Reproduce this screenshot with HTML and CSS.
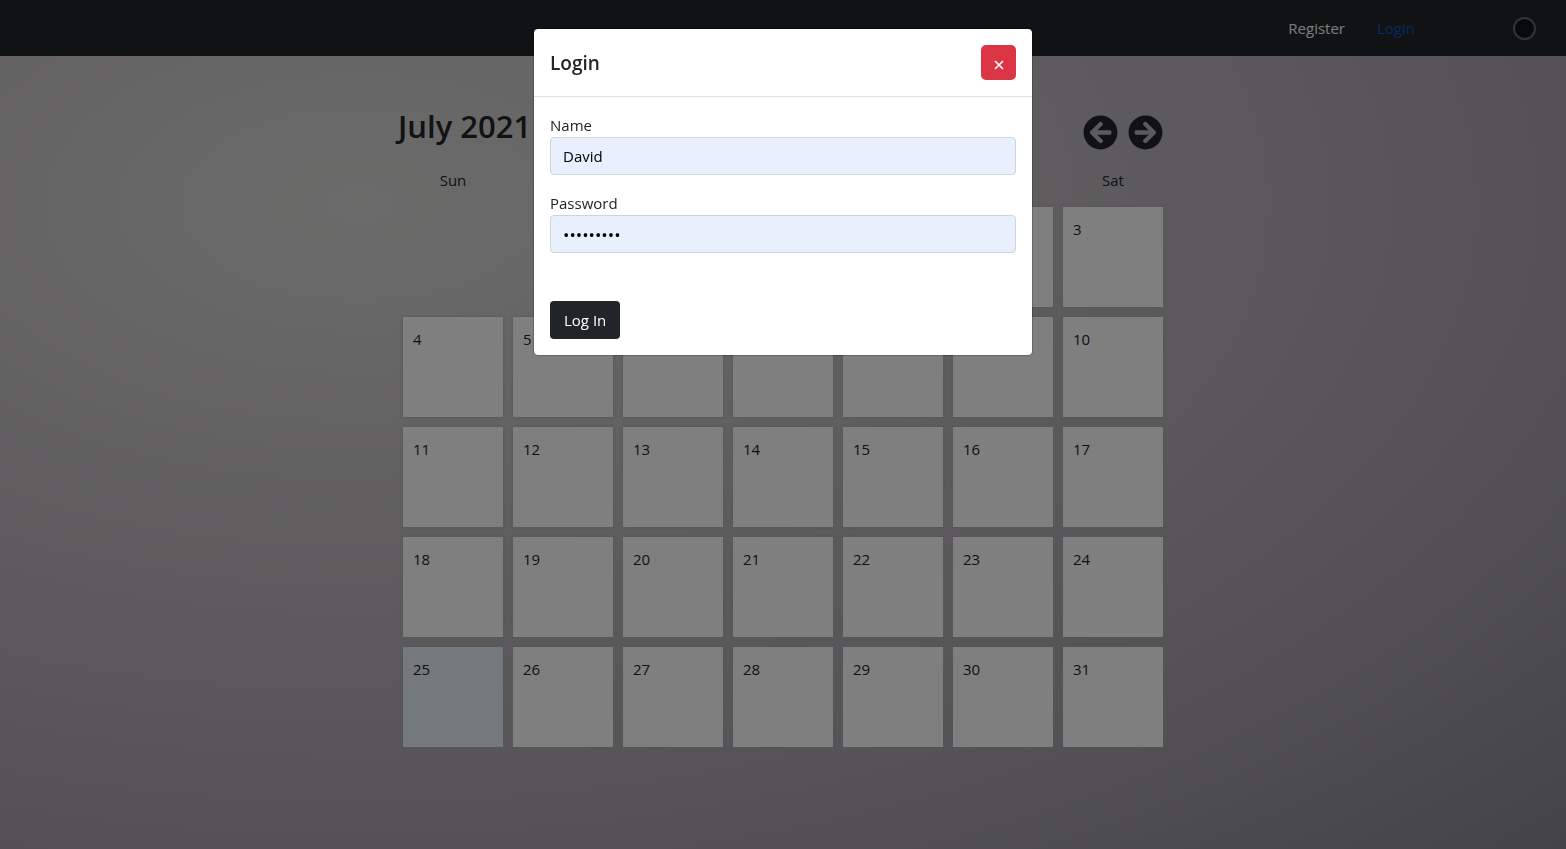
FILE: index.html
```html
<!DOCTYPE html>
<html lang="en">
<head>
<meta charset="utf-8">
<meta name="viewport" content="width=device-width, initial-scale=1">
<title>Calendar</title>
<link rel="stylesheet" href="styles.css">
</head>
<body>
<header class="navbar">
  <nav class="nav-links">
    <a class="nav-link" href="#">Register</a>
    <a class="nav-link active" href="#">Login</a>
  </nav>
  <button class="theme-dot" type="button" aria-label="Theme"></button>
</header>

<main class="calendar">
  <div class="calendar-head">
    <h1 class="calendar-title">July 2021</h1>
    <div class="calendar-nav">
      <button class="arrow" type="button" aria-label="Previous month">
        <svg viewBox="0 0 512 512"><path fill="currentColor" fill-rule="evenodd" d="M256 504C119 504 8 393 8 256S119 8 256 8s248 111 248 248-111 248-248 248zm28.900-143.600L209.400 288H392c13.300 0 24-10.700 24-24v-16c0-13.300-10.700-24-24-24H209.400l75.500-72.400c9.700-9.300 9.900-24.800.4-34.300l-11-10.900c-9.400-9.400-24.600-9.400-33.900 0L107.700 239c-9.400 9.400-9.400 24.600 0 33.900l132.700 132.700c9.400 9.400 24.600 9.400 33.900 0l11-10.900c9.500-9.500 9.300-25-.4-34.300z"/></svg>
      </button>
      <button class="arrow" type="button" aria-label="Next month">
        <svg viewBox="0 0 512 512"><path fill="currentColor" fill-rule="evenodd" d="M256 8c137 0 248 111 248 248S393 504 256 504 8 393 8 256 119 8 256 8zm-28.900 143.600l75.500 72.400H120c-13.300 0-24 10.700-24 24v16c0 13.300 10.700 24 24 24h182.600l-75.500 72.400c-9.700 9.300-9.900 24.800-.4 34.300l11 10.900c9.400 9.400 24.600 9.400 33.900 0L404.300 273c9.400-9.400 9.400-24.600 0-33.900L271.600 106.300c-9.400-9.400-24.600-9.400-33.900 0l-11 10.900c-9.500 9.600-9.300 25.100.4 34.400z"/></svg>
      </button>
    </div>
  </div>
  <table class="month">
    <thead>
      <tr><th>Sun</th><th>Mon</th><th>Tue</th><th>Wed</th><th>Thu</th><th>Fri</th><th>Sat</th></tr>
    </thead>
    <tbody>
      <tr><td class="empty"></td><td class="empty"></td><td class="empty"></td><td class="empty"></td><td>1</td><td>2</td><td>3</td></tr>
      <tr><td>4</td><td>5</td><td>6</td><td>7</td><td>8</td><td>9</td><td>10</td></tr>
      <tr><td>11</td><td>12</td><td>13</td><td>14</td><td>15</td><td>16</td><td>17</td></tr>
      <tr><td>18</td><td>19</td><td>20</td><td>21</td><td>22</td><td>23</td><td>24</td></tr>
      <tr><td class="today">25</td><td>26</td><td>27</td><td>28</td><td>29</td><td>30</td><td>31</td></tr>
    </tbody>
  </table>
</main>

<div class="backdrop">
  <section class="modal" role="dialog" aria-labelledby="modal-title">
    <div class="modal-header">
      <h2 class="modal-title" id="modal-title">Login</h2>
      <button class="close" type="button" aria-label="Close">
        <svg viewBox="0 0 10 10"><path d="M1 1l8 8M9 1l-8 8" stroke="currentColor" stroke-width="1.700"/></svg>
      </button>
    </div>
    <form class="modal-body">
      <div class="field">
        <label for="name">Name</label>
        <input id="name" type="text" value="David">
      </div>
      <div class="field">
        <label for="password">Password</label>
        <input id="password" type="password" value="password1">
      </div>
      <button class="submit" type="submit">Log In</button>
    </form>
  </section>
</div>
</body>
</html>
```
FILE: styles.css
```css
* {
  box-sizing: border-box;
}

body {
  margin: 0;
  min-height: 100vh;
  font-family: "Segoe UI", "Open Sans", "Noto Sans", sans-serif;
  font-size: 15px;
  line-height: 24px;
  color: #212529;
  background: radial-gradient(ellipse farthest-corner at 23% 24%, #d6d7d5 0%, #ccc9cb 21%, #b8b4b8 47%, #a8a4ab 71%, #88868d 100%);
}

button,
input {
  font: inherit;
}

.navbar {
  display: flex;
  align-items: center;
  justify-content: flex-end;
  gap: 98px;
  height: 56px;
  padding: 0 30px;
  background: #212529;
}

.nav-links {
  display: flex;
  gap: 32px;
}

.nav-link {
  color: #f8f9fa;
  text-decoration: none;
}

.nav-link.active {
  color: #0d56c8;
}

.theme-dot {
  width: 23px;
  height: 23px;
  padding: 0;
  border: 2px solid #65676b;
  border-radius: 50%;
  background: #121518;
}

.calendar {
  max-width: 780px;
  margin: 0 auto;
  padding-top: 52px;
}

.calendar-head {
  display: flex;
  justify-content: space-between;
  align-items: flex-start;
  padding: 0 10px 8px 5px;
}

.calendar-title {
  margin: 0;
  font-size: 31px;
  font-weight: 600;
  line-height: 36px;
}

.calendar-nav {
  display: flex;
  gap: 10px;
  padding-top: 7px;
}

.arrow {
  width: 35px;
  height: 35px;
  padding: 0;
  border: 0;
  background: none;
  color: #212529;
}

.arrow svg {
  display: block;
  width: 100%;
}

.month {
  width: 100%;
  table-layout: fixed;
  border-spacing: 10px;
}

.month th {
  padding: 0 0 5px;
  font-weight: 400;
  text-align: center;
}

.month td {
  height: 100px;
  padding: 10px;
  vertical-align: top;
  background: #fff;
  box-shadow: 0 0 4px #aaa;
}

.month .today {
  background: #e6f2fa;
}

.month .empty {
  background: none;
  box-shadow: none;
}

.backdrop {
  position: fixed;
  inset: 0;
  padding: 28px 16px;
  background: rgba(0, 0, 0, 0.5);
}

.modal {
  max-width: 500px;
  margin: 0 auto;
  border: 1px solid rgba(0, 0, 0, 0.2);
  border-radius: 5px;
  background: #fff;
  background-clip: padding-box;
}

.modal-header {
  display: flex;
  align-items: center;
  justify-content: space-between;
  padding: 16px;
  border-bottom: 1px solid #dee2e6;
}

.modal-title {
  margin: 0;
  font-size: 19px;
  font-weight: 600;
}

.close {
  display: flex;
  align-items: center;
  justify-content: center;
  width: 35px;
  height: 35px;
  padding: 5px 0 0;
  border: 0;
  border-radius: 5px;
  background: #dc3545;
  color: #fff;
}

.close svg {
  width: 10px;
  height: 10px;
}

.modal-body {
  padding: 16px;
}

.field {
  margin-bottom: 16px;
}

.field label {
  display: block;
}

.field input {
  display: block;
  width: 100%;
  height: 38px;
  padding: 6px 12px;
  border: 1px solid #ced4da;
  border-radius: 4px;
  background: #e8f0fe;
  color: #000;
}

.field input[type="password"] {
  font-size: 17px;
}

.submit {
  display: block;
  height: 38px;
  margin-top: 48px;
  padding: 6px 14px;
  border: 0;
  border-radius: 4px;
  background: #212529;
  color: #fff;
}
```
